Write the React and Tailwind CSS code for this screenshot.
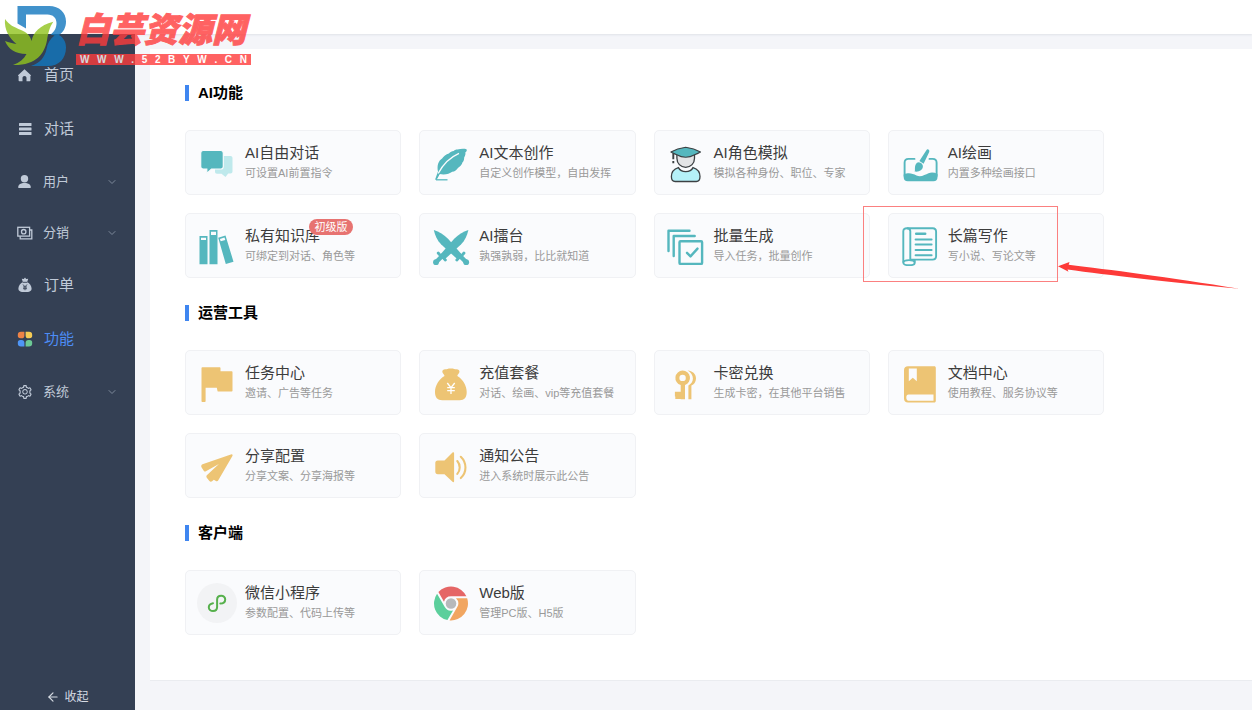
import { useState } from "react"
import { AiOutlineSetting } from "react-icons/ai"
import { ChevronDown, ArrowLeft } from "lucide-react"

const TEAL = "#55b7be"
const GOLD = "#edc474"

/* ---------- sidebar icons ---------- */

function HomeIcon() {
  return (
    <svg viewBox="0 0 16 16" className="size-4" fill="currentColor">
      <path d="M7.500 2.200 1.300 8c-.4.500-.2 1 .3 1v4.600c0 .4.300.7.700.7h3.200v-3.500c0-1.100.8-1.900 2-1.900s2 .8 2 1.900v3.500h3.200c.4 0 .7-.3.700-.7V9c.5 0 .7-.5.300-1L7.500 2.200Z" />
    </svg>
  )
}

function ListIcon() {
  return (
    <svg viewBox="0 0 16 16" className="size-4" fill="currentColor">
      <rect x="2" y="2" width="12.500" height="3" rx=".5" />
      <rect x="2" y="6.500" width="12.500" height="3" rx=".5" />
      <rect x="2" y="11" width="12.500" height="3" rx=".5" />
    </svg>
  )
}

function UserIcon() {
  return (
    <svg viewBox="0 0 16 16" className="size-4" fill="currentColor">
      <circle cx="7.500" cy="4.800" r="3.700" />
      <path d="M1.200 13.200c0-2.600 2.500-4.200 6.300-4.200s6.300 1.600 6.300 4.200c0 .6-.4.900-1 .9H2.200c-.6 0-1-.3-1-.9Z" />
    </svg>
  )
}

function CashIcon() {
  return (
    <svg viewBox="0 0 16 16" className="size-4" fill="none" stroke="currentColor" strokeWidth="1.300">
      <rect x=".8" y="2.300" width="11.800" height="8.800" />
      <circle cx="6.700" cy="6.700" r="2.200" />
      <path d="M12.800 5h2v8.800H3.200v-2.500" />
    </svg>
  )
}

function BagIcon() {
  return (
    <svg viewBox="0 0 16 16" className="size-4">
      <path fill="currentColor" d="m8 .6 1.200 1.400 2-.3-1 3.300c2.500 1.400 4.400 4 4.400 6.500 0 2.600-2 3.600-6.600 3.600s-6.600-1-6.600-3.600C1.400 9 3.300 6.400 5.800 5l-1-3.300 2 .3L8 .6Z" />
      <path d="M5.600 5.300h4.800M6 7.500l2 2.300 2-2.300M8 9.800v3.400M6 10h4M6 11.700h4" fill="none" stroke="#344054" strokeWidth=".9" />
    </svg>
  )
}

function AppsIcon() {
  return (
    <svg viewBox="0 0 16 16" className="size-4">
      <path fill="#ee8346" d="M4 .8h3.400v3.600A2.900 2.900 0 0 1 4.500 7.300H3.500A2.700 2.700 0 0 1 .8 4.500V4A3.200 3.200 0 0 1 4 .8Z" />
      <path fill="#f5cb55" d="M12 .8H8.600v3.600a2.900 2.900 0 0 0 2.900 2.900h1a2.700 2.700 0 0 0 2.700-2.800V4A3.200 3.200 0 0 0 12 .8Z" />
      <path fill="#4f96f6" d="M4 15.400h3.400v-3.600a2.900 2.900 0 0 0-2.900-2.900H3.500a2.700 2.700 0 0 0-2.700 2.800v.5A3.200 3.200 0 0 0 4 15.400Z" />
      <path fill="#6cc995" d="M12 15.400H8.600v-3.600a2.900 2.900 0 0 1 2.900-2.900h1a2.700 2.700 0 0 1 2.700 2.800v.5a3.200 3.200 0 0 1-3.200 3.200Z" />
    </svg>
  )
}

/* ---------- card icons, all on a 40 x 40 board ---------- */

function Board({ children }) {
  return (
    <svg viewBox="0 0 40 40" className="size-10 shrink-0" fill="none">
      {children}
    </svg>
  )
}

const icons = {
  chat: (
    <Board>
      <path fill="#bfe9ec" d="M20 13h13.500c1.200 0 2 .8 2 2v13.500c0 1.200-.8 2-2 2h-2.300L28.500 34l-4-3.300H20c-1.200 0-2-.8-2-2V15c0-1.200.8-2 2-2Z" />
      <path fill={TEAL} stroke="#fafbfd" strokeWidth="1.200" d="M6.200 7.500h17.600c1.500 0 2.500 1 2.500 2.500v13.500c0 1.500-1 2.500-2.500 2.500h-9.300l-4.700 4.500V26H6.200c-1.500 0-2.500-1-2.500-2.500V10c0-1.500 1-2.500 2.500-2.500Z" />
    </Board>
  ),
  books: (
    <Board>
      <g fill={TEAL}>
        <path fillRule="evenodd" d="M2.500 10h8v28.300h-8V10Zm1.500 1.800v2.200h5v-2.200H4Z" />
        <path fillRule="evenodd" d="M12.500 4h8v34.300h-8V4Zm1.500 1.800V9h5V5.800h-5Z" />
        <path fillRule="evenodd" d="m21.200 11.700 7.300-2.200 8 26.200-7.700 2.400-7.600-26.400Zm1.700 1.200.8 2.400 4.600-1.400-.8-2.400-4.600 1.400Z" />
      </g>
    </Board>
  ),
  feather: (
    <Board>
      <path fill={TEAL} d="M35.500 6.200c-2.500-.8-6-.6-9 .4-1.200-.3-2.600.3-3.800 1.300-1.700 0-3.500 1.100-4.800 2.500-2.800.8-5.400 3-6.800 5.100-3.500 2-5.500 7.100-4.100 13.100l-2.900 8h1.500l3-5.600c4.400 1.200 9.900.1 12.600-2.200 2.400-.3 4.800-2 5.700-3.900 2.300-1.200 4.100-3.200 4.500-5.300 1.300-1.600 1.900-3.400 1.700-4.900 1.300-2.100 1.600-3.700 1.200-5.100 1.300-1 1.900-2.200 1.200-3.400Z" />
      <path stroke="#fafbfd" strokeWidth="1.300" d="M7.200 30.500C12 21 18.500 14.500 28 10.300" />
      <path stroke={TEAL} strokeWidth="1.300" d="M5 36.800h11.500" />
      <path stroke={TEAL} strokeWidth="1" d="m5 36.800 3.500-6.500" />
    </Board>
  ),
  swords: (
    <Board>
      {["", "matrix(-1 0 0 1 40.200 0)"].map((t, i) => (
        <g key={i} transform={t || undefined}>
          <path fill={TEAL} d="M2.800 4c5.400 1.700 10.200 4.800 14.200 8.800l14.500 16.500-4.500 4.500L10 18.300C6.300 14.300 4 9.800 2.800 4Z" />
          <path stroke={TEAL} strokeWidth="4.500" strokeLinecap="round" d="m28.500 29.500 6.500 6.500" />
          <path stroke={TEAL} strokeWidth="2.800" strokeLinecap="round" d="m33 27-2.500 3-3 2.200-1.700 1.800" />
          <circle cx="35.200" cy="36.200" r="2.900" fill={TEAL} />
        </g>
      ))}
    </Board>
  ),
  scholar: (
    <Board>
      <path fill="#b5f1f8" stroke="#3c4043" strokeWidth="1.300" d="M12.400 24.600c-4.400 1.400-7 4.600-7 8.900 0 3.700 1 5 3.700 5h21.200c2.700 0 3.700-1.300 3.700-5 0-4.300-2.600-7.500-7-8.900-1.200 2.500-4 4-7.300 4s-6-1.500-7.300-4Z" />
      <path fill="#e3e4e6" stroke="#3c4043" strokeWidth="1.300" d="M10.900 11v4.300c0 5 3.600 9 8.800 9s8.800-4 8.800-9V11Z" />
      <path fill={TEAL} stroke="#3c4043" strokeWidth="1.100" strokeLinejoin="round" d="M19.700 4.300c5 .7 10.500 2.300 14.800 4.700-2.300 1.300-4.600 2.300-6.500 3-2.300 1.500-5 2.200-8.300 2.200s-6-.7-8.300-2.200c-1.900-.7-4.200-1.700-6.500-3 4.300-2.400 9.800-4 14.800-4.700Z" />
      <path stroke="#3c4043" strokeWidth="1.900" d="M7.300 10.300v6M7.300 18v2.200" />
    </Board>
  ),
  batch: (
    <Board>
      <g stroke={TEAL} strokeWidth="2.400" strokeLinecap="round" strokeLinejoin="round">
        <path d="M2.500 25V4.800H23.500" />
        <path d="M7.700 30V10h21" />
        <rect x="13.500" y="15.300" width="22.600" height="22.600" rx="1" />
        <path d="m21 26.800 3.500 3.600 7-7.800" />
      </g>
    </Board>
  ),
  paint: (
    <Board>
      <g stroke={TEAL} strokeWidth="1.900" strokeLinecap="round">
        <path d="M14.500 15.900H8.500c-2.600 0-3.900 1.300-3.900 3.800V33" />
        <path d="M29.500 15.900h3.200c2.600 0 3.900 1.300 3.900 3.800V33" />
      </g>
      <path fill={TEAL} d="M3.700 31.500c5.300-2.200 8.700-.8 12.800 1 4.600 2 8.500-1 12-2.300 3-1.100 6-.7 9 .7v3.400c0 2.500-1.500 4-4 4H7.700c-2.500 0-4-1.500-4-4v-2.800Z" />
      <path fill={TEAL} d="M28.600 6.700c.9.500.9 1.300.5 2.500l-5.500 11.500-4.200-2.600 6.800-10.600c.8-1.200 1.500-1.400 2.400-.8Z" />
      <path fill={TEAL} d="M18.600 19.200c2.800.3 4.600 2.200 4.300 4.600-.4 3.200-3.800 5.500-8.400 4.700.6-.8.4-1.600.4-3.300 0-3.300 1.200-5.700 3.700-6Z" />
    </Board>
  ),
  scroll: (
    <Board>
      <g stroke={TEAL} strokeWidth="1.900" strokeLinejoin="round">
        <path d="M3.300 36.500V5.200c0-1.800 1.300-3 3.500-3s3.500 1.200 3.500 3v28.600" />
        <path d="M7 2.200h25.700c2.200 0 3.400 1.300 3.400 3.600v24.500c0 2-1.300 3.300-3.600 3.300H10" />
        <ellipse cx="9" cy="36.700" rx="5.700" ry="2.600" />
        <path d="M14.700 36.500v-2.700" />
      </g>
      <g stroke={TEAL} strokeLinecap="round">
        <path strokeWidth="2.500" d="M16.200 7.800h9" />
        <path strokeWidth="2" d="M15.600 13.400h16M15.600 18.600h16M15.600 24h16M15.600 29.300h16" />
      </g>
    </Board>
  ),
  flag: (
    <Board>
      <path fill={GOLD} d="M4.500 5c0-.5.400-.8.800-.8h17.200c.6 0 1 .4 1 1v3h11.200c.5 0 .8.300.8.8v18.700c0 .5-.3.800-.8.800H21.300c-.4 0-.7-.2-.8-.6l-.7-3.200H8.600v13.600c0 .5-.3.800-.8.800H5.300c-.5 0-.8-.3-.8-.8V5Z" />
    </Board>
  ),
  bag: (
    <Board>
      <path fill={GOLD} d="M14.500 6.300c1.600 0 2-.8 5.300-.8s3.800.8 5.500.8c2.500 0 3.700 1.500 3 3.200-.7 1.500-1.700 2-2 3.500 5.500 3.200 9.400 9.600 9.400 16 0 5.500-2.300 8.200-7 8.200H11.300c-4.900 0-7.300-2.700-7.300-8.200 0-6.400 4-12.800 9.500-16-.3-1.500-1.300-2-2-3.500-.7-1.700.5-3.200 3-3.200Z" />
      <path stroke="#fff" strokeWidth="1.300" d="m16.300 20 3.700 4.700 3.700-4.700M20 24.700v6.300M16.200 24.700h7.600M16.200 27.600h7.600" />
    </Board>
  ),
  keys: (
    <Board>
      <path fill={GOLD} fillRule="evenodd" d="M16.600 7.500a7.400 7.400 0 0 1 2.400 14.400v14.300h-4.300v-.1H9.300v-2.700h-.4v-4.700h5.800V22a7.400 7.400 0 0 1 1.900-14.500Zm0 4.200a3.200 3.200 0 1 0 0 6.400 3.200 3.200 0 0 0 0-6.400Z" />
      <path fill={GOLD} d="M21.600 7.500c4.700.2 8.400 3.500 8.400 7.900 0 3.300-2 6-4.600 7.200v13.600h-3V22.500c3-1.700 4.500-4 4.500-7 0-3.200-2-6.200-5.300-8Z" />
    </Board>
  ),
  book: (
    <Board>
      <path fill={GOLD} fillRule="evenodd" d="M8 3.200h26.300c.9 0 1.500.6 1.500 1.500v33.300c0 .9-.6 1.500-1.500 1.500H8c-2.500 0-4-1.500-4-4V7.200c0-2.500 1.500-4 4-4Zm.8 2.300v12.700l4-3.500 4 3.500V5.500h-8ZM8.500 31.500c-1.400 0-2.200 1.200-2.200 3.100s.8 3.200 2.200 3.200h25v-6.300h-25Z" />
    </Board>
  ),
  plane: (
    <Board>
      <path fill={GOLD} d="M34.600 8.300c1 0 1.300.8.800 1.700L21.300 34.300c-.5.900-1.500 1.100-2.400.6l-2.100-1.200-1.700 1.500c-1 .8-2 .5-2.700-.3l-2.600-3.200c-.7-.9-.5-2 .3-2.700l11.800-11-13 7.300c-.7.4-1.500.300-2-.3l-2.400-3.800c-.6-1.100-.2-2.500 1-3L34.600 8.300Z" />
    </Board>
  ),
  speaker: (
    <Board>
      <path fill={GOLD} d="M6.800 14.500h6.700l8-7.900c.8-.7 1.600-.4 1.600.6v28c0 1-.8 1.300-1.600.6l-8-7.600H6.800c-1.600 0-2.500-.9-2.500-2.500V17c0-1.600.9-2.500 2.500-2.500Z" />
      <path stroke={GOLD} strokeWidth="2.100" strokeLinecap="round" d="M26.300 15c3.200 3.600 3.200 9.400 0 12.900M29.800 10.800c6.200 6 6.200 15.600 0 21.300" />
    </Board>
  ),
  mini: (
    <Board>
      <circle cx="20" cy="20" r="20" fill="#f2f3f5" />
      <path stroke="#56b04c" strokeWidth="2" strokeLinecap="round" d="M23.300 20.600c2.800 0 4.900-1.600 4.900-4.100 0-2.300-1.800-3.800-4-3.800-2.400 0-4.100 1.600-4.100 4v7.400c0 2.400-1.700 4-4.100 4-2.300 0-4.200-1.500-4.200-3.800 0-2.400 1.800-3.700 4.200-4.100" />
    </Board>
  ),
  chrome: (
    <Board>
      <g transform="translate(20 20.500)">
        <path fill="#e56666" d="M15.400-7.200A17 17 0 0 0-12.600-11.400L-7-1.700A7.200 7.200 0 0 1 0-7.200Z" />
        <path fill="#f1a661" transform="rotate(120)" d="M15.400-7.200A17 17 0 0 0-12.600-11.400L-7-1.700A7.200 7.200 0 0 1 0-7.200Z" />
        <path fill="#5bcf9c" transform="rotate(240)" d="M15.400-7.200A17 17 0 0 0-12.600-11.400L-7-1.700A7.200 7.200 0 0 1 0-7.200Z" />
        <circle r="5.300" fill="#b7b9bb" />
      </g>
    </Board>
  ),
}

const menu = [
  { name: "首页", icon: <HomeIcon /> },
  { name: "对话", icon: <ListIcon /> },
  { name: "用户", icon: <UserIcon />, sub: true },
  { name: "分销", icon: <CashIcon />, sub: true },
  { name: "订单", icon: <BagIcon /> },
  { name: "功能", icon: <AppsIcon /> },
  { name: "系统", icon: <AiOutlineSetting className="size-4" />, sub: true },
]

const sections = [
  {
    title: "AI功能",
    cards: [
      { icon: "chat", name: "AI自由对话", desc: "可设置AI前置指令" },
      { icon: "feather", name: "AI文本创作", desc: "自定义创作模型，自由发挥" },
      { icon: "scholar", name: "AI角色模拟", desc: "模拟各种身份、职位、专家" },
      { icon: "paint", name: "AI绘画", desc: "内置多种绘画接口" },
      { icon: "books", name: "私有知识库", desc: "可绑定到对话、角色等", badge: "初级版" },
      { icon: "swords", name: "AI擂台", desc: "孰强孰弱，比比就知道" },
      { icon: "batch", name: "批量生成", desc: "导入任务，批量创作" },
      { icon: "scroll", name: "长篇写作", desc: "写小说、写论文等", marked: true },
    ],
  },
  {
    title: "运营工具",
    cards: [
      { icon: "flag", name: "任务中心", desc: "邀请、广告等任务" },
      { icon: "bag", name: "充值套餐", desc: "对话、绘画、vip等充值套餐" },
      { icon: "keys", name: "卡密兑换", desc: "生成卡密，在其他平台销售" },
      { icon: "book", name: "文档中心", desc: "使用教程、服务协议等" },
      { icon: "plane", name: "分享配置", desc: "分享文案、分享海报等" },
      { icon: "speaker", name: "通知公告", desc: "进入系统时展示此公告" },
    ],
  },
  {
    title: "客户端",
    cards: [
      { icon: "mini", name: "微信小程序", desc: "参数配置、代码上传等" },
      { icon: "chrome", name: "Web版", desc: "管理PC版、H5版" },
    ],
  },
]

function Watermark() {
  return (
    <div className="pointer-events-none absolute left-0 top-0 z-10 flex opacity-80">
      <svg viewBox="0 0 76 70" className="h-[70px] w-[76px]">
        <path fill="#1277bf" d="M17.500 6H49c10.500 0 17 6.500 17 15.500 0 6-2.500 10.500-7 13.500 4.500 2.600 7 7 7 12.500C66 58.500 59 66 48 66H31c9-3 14-9 15.500-17 1-5.500 3.500-10 8-13.500l-4-1c3.800-2.500 6-6.500 6-11.500 0-5-3.500-8.500-9-8.500H26v14l-8.500-5V6Z" />
        <path fill="#91c41e" d="M5 19c4 6 9 8 16 11 6 2.600 9.500 6 10.500 11 2-9 8-15.500 21.800-19.300-4 6-5 11-6.300 18.500C44.500 54 36 65.500 13 65c6.500-2.200 11-6 13.500-11C15 53.500 8.500 49.500 5 41c4 1.800 7.500 2.200 11.500 3C9.500 38.500 4 30 5 19Z" />
      </svg>
      <div className="flex w-[175px] flex-col pt-[13px]">
        <p className="h-[41px] whitespace-nowrap text-[34px] font-black italic leading-[34px] text-[#ff3c3c] [-webkit-text-stroke:1px_#ff3c3c]">
          白芸资源网
        </p>
        <p className="flex h-[11px] items-center justify-between bg-[#ff3c3c] px-1 text-[10px] font-bold leading-[11px] text-white">
          {"WWW.52BYW.CN".split("").map((c, i) => <span key={i}>{c}</span>)}
        </p>
      </div>
    </div>
  )
}

function MenuItem({ item, active, onClick }) {
  const size = item.sub
    ? "h-[51px] gap-[10px] text-[13px]"
    : "h-[54px] gap-[11px] text-[15px]"
  return (
    <button
      onClick={onClick}
      className={`flex w-full items-center px-[17px] ${size} ${active ? "text-[#4d8df5]" : "text-[#c0cad8]"}`}
    >
      {item.icon}
      <span>{item.name}</span>
      {item.sub && <ChevronDown className="ml-auto size-3 text-[#7d899a]" strokeWidth={2} />}
    </button>
  )
}

function Card({ card }) {
  return (
    <a href="#" className="relative flex h-[65px] items-center gap-2 rounded-[5px] border border-[#f0f1f4] bg-[#fafbfd] px-[11px]">
      {icons[card.icon]}
      <div className="whitespace-nowrap">
        <p className="text-[15px] leading-5 text-[#3c3c3c]">{card.name}</p>
        <p className="text-[11px] leading-5 text-[#999]">{card.desc}</p>
      </div>
      {card.badge && (
        <span className="absolute left-[123px] top-[5px] flex h-4 w-11 items-center justify-center rounded-full bg-[#e77371] text-[11px] text-white">
          {card.badge}
        </span>
      )}
      {card.marked && (
        <>
          <span className="absolute -left-[26px] -top-2 h-[76px] w-[195px] border border-[#fb8080]"></span>
          <svg viewBox="0 0 182 30" className="absolute left-[169px] top-[46px] h-[30px] w-[182px]">
            <path fill="#fd3a38" d="M0 6.200 11.500 2l-.8 2.700C50 9.500 110 17 181.500 28.800 110 22 50 15 9.500 9.500l1 2.300L0 6.200Z" />
          </svg>
        </>
      )}
    </a>
  )
}

function App() {
  const [active, setActive] = useState("功能")

  return (
    <div className={`relative flex min-h-screen flex-col overflow-x-hidden bg-[#f4f5f9] font-["Liberation_Sans","Noto_Sans_CJK_SC",sans-serif]`}>
      <Watermark />
      <header className="h-[34px] bg-white shadow-[0_1px_2px_#dfe2e8]"></header>

      <div className="flex flex-1">
        <aside className="relative flex w-[135px] shrink-0 flex-col bg-[#344054] pt-[14px]">
          <nav>
            {menu.map((item) => (
              <MenuItem key={item.name} item={item} active={active == item.name} onClick={() => setActive(item.name)} />
            ))}
          </nav>
          <button className="mt-auto flex items-center justify-center gap-1 pb-[3px] text-[12px] leading-5 text-[#d6dbe3]">
            <ArrowLeft className="size-[14px]" strokeWidth={2} />
            收起
          </button>
        </aside>

        <main className="min-w-0 flex-1 pb-[29px] pl-[15px] pt-[15px]">
          <div className="border-b border-[#eaecf0] bg-white px-[35px] pb-[45px] pt-[36px]">
            <div className="flex max-w-[919px] flex-col gap-[27px]">
              {sections.map((s) => (
                <section key={s.title}>
                  <h2 className="mb-[29px] flex h-4 items-center border-l-4 border-[#3f86f0] pl-[9px] text-[15px] font-bold leading-4 text-black">
                    {s.title}
                  </h2>
                  <div className="grid grid-cols-4 gap-[18px]">
                    {s.cards.map((c) => <Card key={c.name} card={c} />)}
                  </div>
                </section>
              ))}
            </div>
          </div>
        </main>
      </div>
    </div>
  )
}

export default App
